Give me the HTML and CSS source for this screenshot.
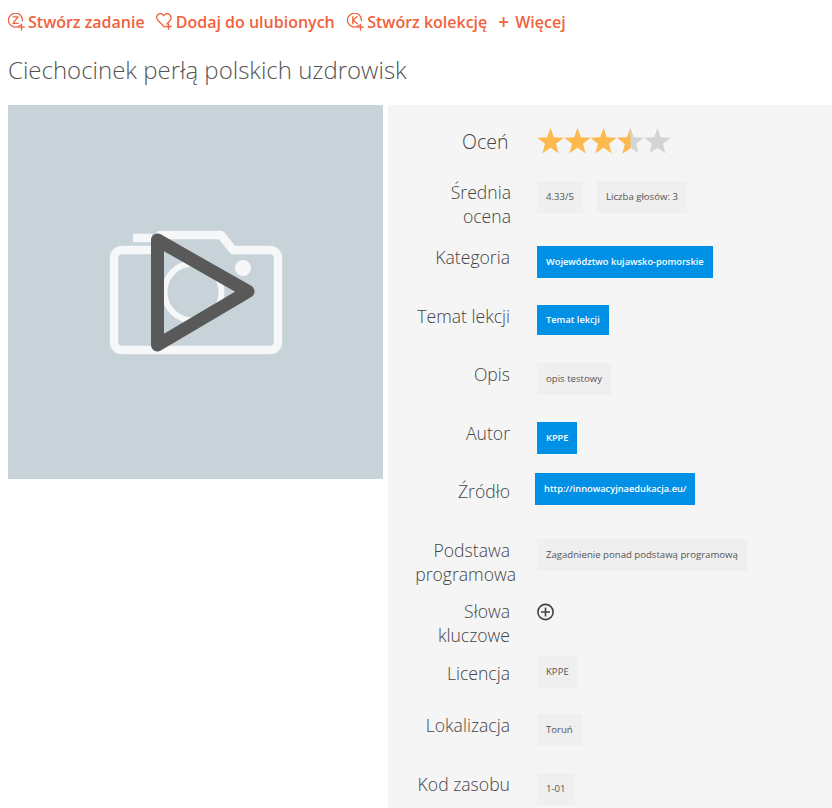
FILE: index.html
```html
<!DOCTYPE html>
<html lang="pl">
<head>
<meta charset="utf-8">
<title>Ciechocinek perłą polskich uzdrowisk</title>
<link rel="stylesheet" href="styles.css">
</head>
<body>
<nav class="actions">
  <a class="action">
    <svg class="action-icon" viewBox="0 0 17 18"><path d="M12.300 12.300A7 7 0 1 1 14.500 7.500" /><path d="M5 3.800h5L5 10.400h5.200" /><path d="M13.500 11.500v5.500M10.800 14.200h5.500" /></svg>
    Stwórz zadanie
  </a>
  <a class="action action-fav">
    <svg class="action-icon" viewBox="0 0 17 18"><path d="M8.500 14 1.600 7C-.5 4 1.300.6 4.300.6c1.500 0 2.700.9 3.400 2.200C8.400 1.500 9.700.6 11.100.6c3 0 4.600 3 3.400 6.200L11 11" /><path d="M12.500 10.800v5.400M9.800 13.500h5.400" /></svg>
    Dodaj do ulubionych
  </a>
  <a class="action action-col">
    <svg class="action-icon" viewBox="0 0 17 18"><path d="M12.300 12.300A7 7 0 1 1 14.500 7.500" /><path d="M5.800 3.600v7.200M10 3.600 6 7.200l4.400 3.600" /><path d="M13.500 11.500v5.500M10.800 14.200h5.500" /></svg>
    Stwórz kolekcję
  </a>
  <a class="action action-more"><span class="more-plus">+</span> Więcej</a>
</nav>
<h1 class="title">Ciechocinek perłą polskich uzdrowisk</h1>
<main class="content">
  <div class="media">
    <svg class="media-art" viewBox="0 0 210 160">
      <g class="camera">
        <path d="M32 40H70V25H131L143 40H180a8 8 0 0 1 8 8V132a8 8 0 0 1-8 8H32a8 8 0 0 1-8-8V48a8 8 0 0 1 8-8z" />
        <path d="M43 28H62" />
        <circle class="lens" cx="103" cy="82" r="28.500" />
      </g>
      <circle class="camera-dot" cx="153" cy="58" r="8" />
      <path class="play" d="M67.500 30 158 81.500 67.500 135z" />
    </svg>
  </div>
  <section class="details">
    <div class="label label-rate">Oceń</div>
    <div class="value value-rate">
      <span class="stars" role="img" aria-label="3.5/5">
        <svg class="star" viewBox="0 0 27 26"><path class="on" d="M13.500 0l3.400 9.300 9.800.4-7.700 6.100 2.600 9.500-8.100-5.500-8.100 5.500 2.600-9.500L.3 9.700l9.800-.4z"/></svg>
        <svg class="star" viewBox="0 0 27 26"><path class="on" d="M13.500 0l3.400 9.300 9.800.4-7.700 6.100 2.600 9.500-8.100-5.500-8.100 5.500 2.600-9.500L.3 9.700l9.800-.4z"/></svg>
        <svg class="star" viewBox="0 0 27 26"><path class="on" d="M13.500 0l3.400 9.300 9.800.4-7.700 6.100 2.600 9.500-8.100-5.500-8.100 5.500 2.600-9.500L.3 9.700l9.800-.4z"/></svg>
        <svg class="star" viewBox="0 0 27 26"><path class="off" d="M13.500 0l3.400 9.300 9.800.4-7.700 6.100 2.600 9.500-8.100-5.500-8.100 5.500 2.600-9.500L.3 9.700l9.800-.4z"/><path class="on" d="M13.500 0v20.300l-8.100 5.500 2.600-9.500L.3 9.700l9.800-.4z"/></svg>
        <svg class="star" viewBox="0 0 27 26"><path class="off" d="M13.500 0l3.400 9.300 9.800.4-7.700 6.100 2.600 9.500-8.100-5.500-8.100 5.500 2.600-9.500L.3 9.700l9.800-.4z"/></svg>
      </span>
    </div>

    <div class="label label-avg">Średnia ocena</div>
    <div class="value"><span class="chip">4.33/5</span><span class="chip">Liczba głosów: 3</span></div>

    <div class="label">Kategoria</div>
    <div class="value"><span class="chip chip-link">Województwo kujawsko-pomorskie</span></div>

    <div class="label">Temat lekcji</div>
    <div class="value"><span class="chip chip-link chip-short">Temat lekcji</span></div>

    <div class="label">Opis</div>
    <div class="value"><span class="chip">opis testowy</span></div>

    <div class="label">Autor</div>
    <div class="value"><span class="chip chip-link">KPPE</span></div>

    <div class="label label-source">Źródło</div>
    <div class="value value-source"><span class="chip chip-link">http://innowacyjnaedukacja.eu/</span></div>

    <div class="label">Podstawa <span class="line-over">programowa</span></div>
    <div class="value"><span class="chip">Zagadnienie ponad podstawą programową</span></div>

    <div class="label label-narrow">Słowa kluczowe</div>
    <div class="value value-plus">
      <svg class="plus" viewBox="0 0 18 18"><circle cx="8.500" cy="9" r="7.600"/><path d="M8.500 4.500v9M4 9h9"/></svg>
    </div>

    <div class="label label-license">Licencja</div>
    <div class="value"><span class="chip">KPPE</span></div>

    <div class="label">Lokalizacja</div>
    <div class="value"><span class="chip">Toruń</span></div>

    <div class="label">Kod zasobu</div>
    <div class="value"><span class="chip">1-01</span></div>
  </section>
</main>
</body>
</html>
```
FILE: styles.css
```css
* { box-sizing: border-box; }
html, body { margin: 0; padding: 0; }
body {
  width: 832px;
  height: 808px;
  overflow: hidden;
  background: #fff;
  font-family: "Open Sans", sans-serif;
  color: #555;
}
.actions {
  display: flex;
  align-items: center;
  height: 44px;
  padding-left: 8px;
}
.action {
  display: flex;
  align-items: center;
  gap: 3px;
  font-size: 16px;
  font-weight: 600;
  color: #f0623d;
  white-space: nowrap;
}
.action-fav { margin-left: 11px; }
.action-col { margin-left: 12.500px; }
.action-more { margin-left: 11px; gap: 6px; }
.more-plus { font-size: 19px; line-height: 20px; }
.action-icon {
  width: 17px;
  height: 18px;
  fill: none;
  stroke: #f0623d;
  stroke-width: 1.300;
  stroke-linecap: round;
  stroke-linejoin: round;
}
.title {
  margin: 7px 0 17px 8px;
  height: 37px;
  font-size: 24px;
  line-height: 37px;
  font-weight: 300;
  color: #555;
  white-space: nowrap;
}
.content {
  display: flex;
  align-items: flex-start;
  gap: 5px;
  padding-left: 8px;
}
.media {
  flex: 0 0 375px;
  height: 374px;
  padding: 0 1px 4px 0;
  background: #c8d2d9;
  display: flex;
  align-items: center;
  justify-content: center;
}
.media-art { width: 210px; height: 160px; }
.camera {
  fill: none;
  stroke: #f6f7f8;
  stroke-width: 8.500;
  stroke-linejoin: round;
  stroke-linecap: butt;
  filter: blur(0.5px);
}
.lens { stroke-width: 6; }
.camera-dot { fill: #f6f7f8; }
.play {
  fill: none;
  stroke: #595959;
  stroke-width: 13;
  stroke-linejoin: round;
}
.details {
  flex: 0 0 444px;
  height: 703px;
  background: #f5f5f5;
  display: grid;
  grid-template-columns: 122px 322px;
  grid-template-rows: 76px 65px 59px 58px 59px 51px 66px 61px 56px 58px 59px 35px;
}
.label {
  margin-top: -1px;
  text-align: right;
  font-size: 17.600px;
  line-height: 24px;
  font-weight: 300;
  color: #444;
}
.label-rate { margin-top: 0; padding-top: 25px; font-size: 19.500px; padding-right: 1.500px; }
.label-avg { padding-left: 40px; margin-right: -1px; }
.label-narrow { padding-left: 40px; }
.line-over { display: block; margin-right: -6px; }
.label-source { padding-top: 7px; }
.label-license { padding-top: 6px; }
.value {
  display: flex;
  align-items: flex-start;
  gap: 14px;
  padding-left: 27px;
}
.value-rate { padding-top: 23px; }
.value-source { padding-left: 25px; }
.value-plus { padding-top: 3px; }
.stars { display: flex; }
.star { width: 27px; height: 26px; margin-right: -0.330px; }
.on { fill: #fdb94d; }
.off { fill: #d4d4d4; }
.chip {
  display: block;
  padding: 0 9px;
  height: 32px;
  line-height: 32px;
  font-size: 9.600px;
  color: #555;
  background: #efefef;
  white-space: nowrap;
}
.chip-link {
  background: #0090e6;
  color: #fff;
  font-size: 9.250px;
  font-weight: 600;
}
.chip-short { height: 30px; line-height: 30px; }
.plus {
  width: 18px;
  height: 18px;
  fill: none;
  stroke: #444;
  stroke-width: 1.600;
}
```
